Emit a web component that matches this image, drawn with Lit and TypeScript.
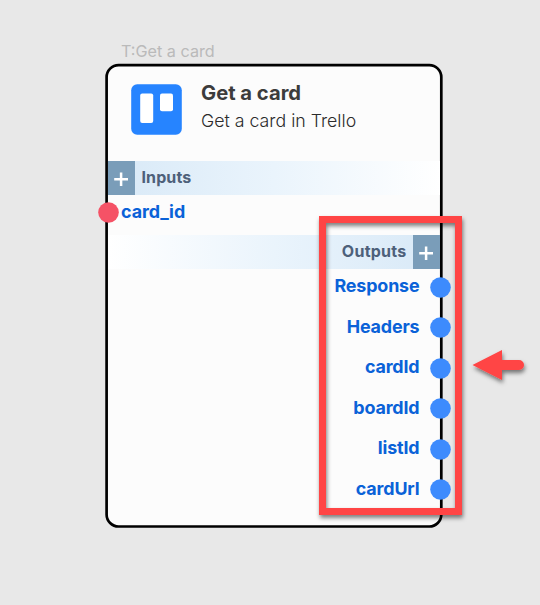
import { LitElement, html, css } from "lit";
import { customElement, property } from "lit/decorators.js";

@customElement("section-bar")
class SectionBar extends LitElement {
  @property() label = "";
  @property({ reflect: true }) side = "left";

  static styles = css`
    :host {
      display: flex;
      height: 34px;
      align-items: center;
      gap: 6.5px;
      background: linear-gradient(90deg, #d8e9f7 0%, #eaf4fc 50%, #ffffff 100%);
      color: #4d607a;
      font-size: 16px;
      font-weight: 700;
      line-height: 33px;
    }
    :host([side="right"]) {
      flex-direction: row-reverse;
      background: linear-gradient(270deg, #d8e9f7 0%, #eaf4fc 50%, #ffffff 100%);
    }
    .add {
      width: 27px;
      height: 34px;
      background: #7a9db9;
      flex: none;
    }
    .add svg {
      display: block;
    }
    .label {
      height: 34px;
      letter-spacing: 0.1px;
    }
    :host([side="right"]) .label {
      letter-spacing: 0.25px;
    }
  `;

  render() {
    return html`
      <div class="add">
        <svg width="27" height="34" viewBox="0 0 27 34">
          <path d="M6.2 18.2H20M13.1 11.6V25" fill="none" stroke="#fff" stroke-width="2.5" />
        </svg>
      </div>
      <span class="label">${this.label}</span>
    `;
  }
}

@customElement("app-root")
class AppRoot extends LitElement {
  private outputs = ["Response", "Headers", "cardId", "boardId", "listId", "cardUrl"];

  static styles = css`
    :host {
      display: block;
      position: relative;
      box-sizing: border-box;
      width: 540px;
      height: 605px;
      padding: 42px 98px 0 105px;
      overflow: hidden;
      background: #e8e8e8;
      font-family: Inter, "Liberation Sans", sans-serif;
    }
    .caption {
      height: 21px;
      padding-left: 16px;
      color: #bababa;
      font-size: 16.2px;
      font-weight: 400;
      line-height: 19px;
      white-space: nowrap;
    }
    .node {
      position: relative;
      box-sizing: border-box;
      width: 338px;
      height: 465px;
      padding: 3px;
    }
    .frame {
      position: absolute;
      left: 0;
      top: 0;
    }
    .body {
      position: relative;
    }
    .header {
      display: flex;
      height: 95px;
      box-sizing: border-box;
      padding: 18px 0 0 23px;
      gap: 19px;
    }
    .logo {
      display: block;
      flex: none;
    }
    .title {
      color: #3c3c3c;
      font-size: 20.2px;
      font-weight: 700;
      line-height: 28px;
      margin-top: -5px;
      white-space: nowrap;
    }
    .subtitle {
      color: #2c2c2c;
      font-size: 17.75px;
      font-weight: 350;
      line-height: 27px;
      white-space: nowrap;
    }
    .input {
      display: flex;
      align-items: center;
      box-sizing: border-box;
      height: 40px;
      padding-bottom: 4.5px;
      gap: 2px;
      margin-left: -10px;
    }
    .port {
      color: #0a62d8;
      font-size: 17.9px;
      font-weight: 700;
      line-height: 24px;
      letter-spacing: -0.15px;
    }
    .input .port {
      letter-spacing: -0.05px;
    }
    .outputs {
      margin-top: -2px;
    }
    .output {
      display: flex;
      align-items: center;
      justify-content: flex-end;
      height: 40.5px;
      gap: 10.5px;
      margin-right: -11px;
    }
    .output .port,
    .input .port {
      margin-top: -2px;
    }
    .dot {
      display: block;
      flex: none;
    }
    .annotation {
      position: absolute;
      left: 0;
      top: 0;
      pointer-events: none;
    }
  `;

  private dot(color: string) {
    return html`<svg class="dot" width="21" height="21" viewBox="0 0 21 21">
      <circle cx="10.5" cy="10.5" r="10.3" fill=${color} />
    </svg>`;
  }

  render() {
    return html`
      <div class="caption">T:Get a card</div>
      <div class="node">
        <svg class="frame" width="338" height="465" viewBox="0 0 338 465">
          <rect x="1.6" y="2.1" width="334.7" height="461.4" rx="12" fill="#fcfcfc" stroke="#000" stroke-width="2.7" />
        </svg>
        <div class="body">
          <div class="header">
            <svg class="logo" width="51" height="51" viewBox="0 0 51 51">
              <rect x="0.2" y="0.3" width="50.6" height="50.4" rx="6" fill="#2684ff" />
              <rect x="9.2" y="9.6" width="13" height="29.4" rx="2" fill="#fff" />
              <rect x="29" y="9.6" width="13" height="17.6" rx="2" fill="#fff" />
            </svg>
            <div>
              <div class="title">Get a card</div>
              <div class="subtitle">Get a card in Trello</div>
            </div>
          </div>
          <section-bar label="Inputs" side="left"></section-bar>
          <div class="input">
            ${this.dot("#f55266")}<span class="port">card_id</span>
          </div>
          <section-bar label="Outputs" side="right"></section-bar>
          <div class="outputs">
            ${this.outputs.map(
              (name) => html`<div class="output"><span class="port">${name}</span>${this.dot("#3d8bfd")}</div>`
            )}
          </div>
        </div>
      </div>
      <svg class="annotation" width="540" height="605" viewBox="0 0 540 605">
        <defs>
          <filter id="shade" filterUnits="userSpaceOnUse" x="300" y="200" width="240" height="340">
            <feDropShadow dx="1" dy="3" stdDeviation="2.2" flood-color="#000" flood-opacity="0.5" />
          </filter>
        </defs>
        <g filter="url(#shade)">
          <rect x="322.5" y="219.5" width="136" height="292" fill="none" stroke="#ff4444" stroke-width="7" />
          <path d="M472.5 365L502 350V360H519A5 5 0 0 1 519 370H502V380Z" fill="#ff4444" />
        </g>
      </svg>
    `;
  }
}
